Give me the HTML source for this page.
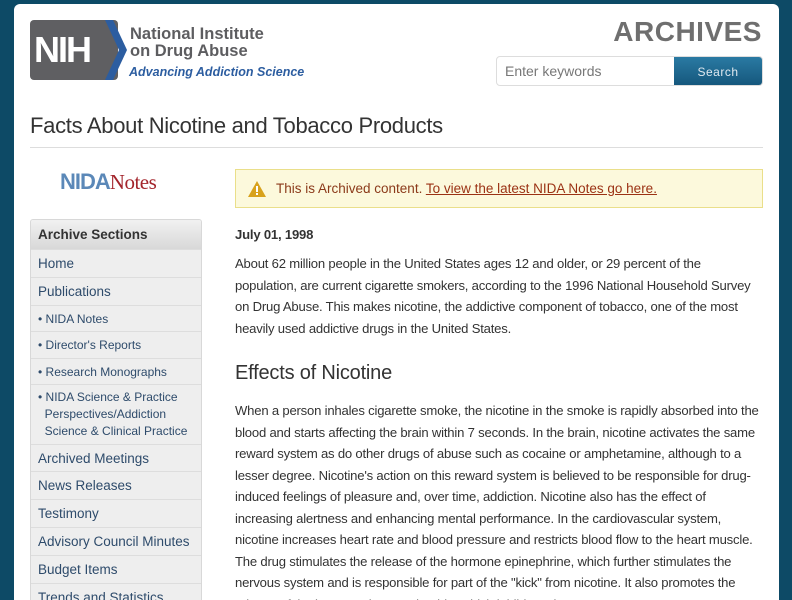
<!DOCTYPE html>
<html><head><meta charset="utf-8"><style>
*{margin:0;padding:0;box-sizing:border-box}
html,body{width:792px;height:600px;overflow:hidden}
body{background:#0d4a66;font-family:"Liberation Sans",sans-serif;position:relative}
.card{position:absolute;left:14px;top:4px;width:765px;height:596px;background:#fff;border-radius:6px 6px 0 0}
.abs{position:absolute}
.nih{left:30px;top:20px;width:88px;height:60px;background:#5f5f62;border-radius:4px;color:#fff;font-size:36px;font-weight:bold;line-height:60px;padding-left:4px;letter-spacing:-2px}
.t1{left:130px;top:26px;color:#5d5d60;font-weight:bold;font-size:16.5px;line-height:17px}
.t2{left:129px;top:65px;color:#2c5da0;font-weight:bold;font-style:italic;font-size:12.5px}
.arch{right:30px;top:16px;color:#6f6f6f;font-weight:bold;font-size:28px;letter-spacing:0.5px}
.search{left:496px;top:56px;width:267px;height:30px;border:1px solid #ddd;border-radius:4px;overflow:hidden}
.search span{position:absolute;left:8px;top:6px;color:#777;font-size:14px}
.search b{position:absolute;right:0;top:0;width:88px;height:30px;background:linear-gradient(#2a7aa3,#14557a);color:#dfe9f0;font-weight:normal;font-size:12px;text-align:center;line-height:30px;letter-spacing:.5px}
h1{position:absolute;left:30px;top:113px;font-weight:normal;font-size:22px;color:#333;letter-spacing:-.3px}
.hr{left:30px;top:147px;width:733px;height:1px;background:#ddd}
.nn{left:60px;top:169px;font-size:22px;letter-spacing:-1px}
.side{left:30px;top:219px;width:172px;border:1px solid #d8d8d8;border-radius:3px;overflow:hidden;background:#eee}
.side div{border-top:1px solid #ddd;padding:0 7px;color:#2e4b6b;font-size:13.5px;display:flex;align-items:center}
.side .hd{border-top:none;background:linear-gradient(#f1f1f1,#d8d8d8);color:#333;font-weight:bold;height:29px}
.side .s{font-size:12px}
.alert{left:235px;top:169px;width:528px;height:39px;background:#fcf9dc;border:1px solid #eadf8a}
.alert p{position:absolute;left:40px;top:11px;font-size:13.5px;color:#8b3a1a;white-space:nowrap}
.alert a{color:#9b3214;text-decoration:underline}
.main{left:235px;font-size:13.1px;color:#333;line-height:21.5px;white-space:nowrap;letter-spacing:-.2px}
</style></head><body>
<div class="card"></div>
<div class="abs nih">NIH</div>
<svg class="abs" style="left:105px;top:20px" width="22" height="60"><polygon points="0,0 8,0 22,30 8,60 0,60 14,30" fill="#2c5da0"/></svg>
<div class="abs t1">National Institute<br>on Drug Abuse</div>
<div class="abs t2">Advancing Addiction Science</div>
<div class="abs arch">ARCHIVES</div>
<div class="abs search"><span>Enter keywords</span><b>Search</b></div>
<h1>Facts About Nicotine and Tobacco Products</h1>
<div class="abs hr"></div>
<div class="abs nn"><span style="color:#5b88b8;font-weight:bold">NIDA</span><span style="color:#a3242b;font-family:'Liberation Serif',serif;font-size:21px;letter-spacing:-.5px">Notes</span></div>
<div class="abs side">
<div class="hd">Archive Sections</div>
<div style="height:28px">Home</div>
<div style="height:28px">Publications</div>
<div class="s" style="height:26px">• NIDA Notes</div>
<div class="s" style="height:27px">• Director's Reports</div>
<div class="s" style="height:26px">• Research Monographs</div>
<div class="s" style="height:60px;line-height:17px;align-items:center">• NIDA Science &amp; Practice<br>&nbsp;&nbsp;Perspectives/Addiction<br>&nbsp;&nbsp;Science &amp; Clinical Practice</div>
<div style="height:27px">Archived Meetings</div>
<div style="height:28px">News Releases</div>
<div style="height:28px">Testimony</div>
<div style="height:28px">Advisory Council Minutes</div>
<div style="height:28px">Budget Items</div>
<div style="height:28px">Trends and Statistics</div>
</div>
<div class="abs alert"><svg class="abs" style="left:11px;top:10px" width="20" height="18"><polygon points="10,1 19,17 1,17" fill="#d8a21c"/><rect x="9" y="6" width="2" height="6" fill="#fff"/><rect x="9" y="13" width="2" height="2" fill="#fff"/></svg><p>This is Archived content. <a>To view the latest NIDA Notes go here.</a></p></div>
<div class="abs main" style="top:224px;font-weight:bold">July 01, 1998</div>
<div class="abs main" style="top:253px">About 62 million people in the United States ages 12 and older, or 29 percent of the<br>population, are current cigarette smokers, according to the 1996 National Household Survey<br>on Drug Abuse. This makes nicotine, the addictive component of tobacco, one of the most<br>heavily used addictive drugs in the United States.</div>
<div class="abs main" style="top:360px;font-size:20px;line-height:26px">Effects of Nicotine</div>
<div class="abs main" style="top:400px">When a person inhales cigarette smoke, the nicotine in the smoke is rapidly absorbed into the<br>blood and starts affecting the brain within 7 seconds. In the brain, nicotine activates the same<br>reward system as do other drugs of abuse such as cocaine or amphetamine, although to a<br>lesser degree. Nicotine's action on this reward system is believed to be responsible for drug-<br>induced feelings of pleasure and, over time, addiction. Nicotine also has the effect of<br>increasing alertness and enhancing mental performance. In the cardiovascular system,<br>nicotine increases heart rate and blood pressure and restricts blood flow to the heart muscle.<br>The drug stimulates the release of the hormone epinephrine, which further stimulates the<br>nervous system and is responsible for part of the "kick" from nicotine. It also promotes the<br>release of the hormone beta-endorphin, which inhibits pain.</div>
</body></html>
